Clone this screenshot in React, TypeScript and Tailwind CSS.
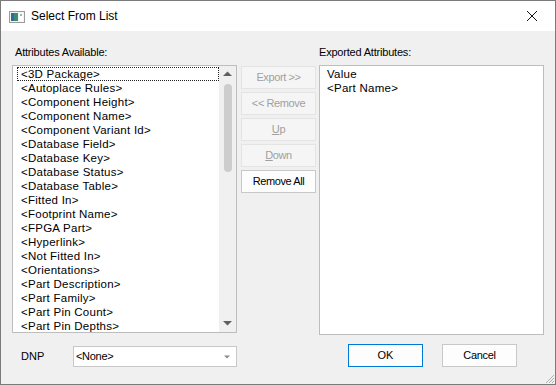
import React from "react";

const items = [
  "<3D Package>",
  "<Autoplace Rules>",
  "<Component Height>",
  "<Component Name>",
  "<Component Variant Id>",
  "<Database Field>",
  "<Database Key>",
  "<Database Status>",
  "<Database Table>",
  "<Fitted In>",
  "<Footprint Name>",
  "<FPGA Part>",
  "<Hyperlink>",
  "<Not Fitted In>",
  "<Orientations>",
  "<Part Description>",
  "<Part Family>",
  "<Part Pin Count>",
  "<Part Pin Depths>",
];

const btnBase =
  "h-[23px] w-[75px] border text-[11px] tracking-[-0.4px] flex items-center justify-center leading-none";

export default function App() {
  return (
    <div
      className="w-[556px] h-[385px] border border-[#7a7a7a] flex flex-col bg-[#f0f0f0] text-[#000] overflow-hidden"
      style={{ fontFamily: '"Liberation Sans", Arial, sans-serif' }}
    >
      {/* Title bar */}
      <div className="h-[30px] bg-white flex items-center shrink-0">
        <svg width="16" height="12" viewBox="0 0 16 12" className="ml-[8px] mt-[1px]">
          <rect x="0.5" y="0.5" width="15" height="11" fill="#f4f4f4" stroke="#9a9a9a" />
          <rect x="2" y="2" width="7" height="8" fill="#3b8a7a" />
          <rect x="2" y="2" width="3" height="8" fill="#2f6aa0" />
          <rect x="10" y="2" width="4" height="8" fill="#ffffff" />
          <rect x="11" y="3" width="2" height="2" fill="#8fbf9a" />
        </svg>
        <span className="ml-[6px] text-[12px] text-black">Select From List</span>
        <div className="ml-auto mr-[17px] w-[12px] h-[12px] flex items-center justify-center">
          <svg width="12" height="12" viewBox="0 0 12 12">
            <path d="M1 1 L11 11 M11 1 L1 11" stroke="#111" strokeWidth="1" />
          </svg>
        </div>
      </div>

      {/* Body */}
      <div className="flex-1 flex flex-col pl-[11px] pr-[11px] pt-[14px]">
        <div className="flex">
          {/* Left column */}
          <div className="w-[225px] flex flex-col">
            <div className="h-[20px] pl-[3px] text-[11px] tracking-[-0.2px] leading-[15px]">
              Attributes Available:
            </div>
            <div className="h-[268px] border border-[#bdbdbd] bg-white flex overflow-hidden">
              <div className="flex-1 pt-[1px] pl-[4px] overflow-hidden">
                {items.map((it, i) => (
                  <div
                    key={it}
                    className={
                      "h-[14px] pl-[4px] text-[11.5px] leading-[14px] whitespace-nowrap tracking-[0.25px] " +
                      (i === 0 ? "outline outline-1 outline-dotted outline-[#222] -outline-offset-1" : "")
                    }
                  >
                    {it}
                  </div>
                ))}
              </div>
              <div className="w-[17px] bg-[#f0f0f0] flex flex-col items-center">
                <svg width="9" height="6" viewBox="0 0 9 6" className="mt-[5px]">
                  <path d="M0 5 L4.5 0.5 L9 5 Z" fill="#606060" />
                </svg>
                <div className="mt-[7px] w-[8px] h-[88px] rounded-[4px] bg-[#cdcdcd]" />
                <div className="flex-1" />
                <svg width="9" height="6" viewBox="0 0 9 6" className="mb-[6px]">
                  <path d="M0 1 L4.5 5.5 L9 1 Z" fill="#606060" />
                </svg>
              </div>
            </div>
          </div>

          {/* Buttons */}
          <div className="w-[75px] ml-[4px] pt-[20px] flex flex-col gap-[3px]">
            <div className={btnBase + " bg-[#f5f5f5] border-[#e4e4e4] text-[#a0a0a0] mt-[1px]"}>Export &gt;&gt;</div>
            <div className={btnBase + " bg-[#f5f5f5] border-[#e4e4e4] text-[#a0a0a0]"}>&lt;&lt; Remove</div>
            <div className={btnBase + " bg-[#f5f5f5] border-[#e4e4e4] text-[#a0a0a0]"}>
              <span><span className="underline">U</span>p</span>
            </div>
            <div className={btnBase + " bg-[#f5f5f5] border-[#e4e4e4] text-[#a0a0a0]"}>
              <span><span className="underline">D</span>own</span>
            </div>
            <div className={btnBase + " bg-[#fdfdfd] border-[#c8c8c8] text-black"}>Remove All</div>
          </div>

          {/* Right column */}
          <div className="w-[225px] ml-[3px] flex flex-col">
            <div className="h-[20px] text-[11px] tracking-[-0.2px] leading-[15px]">Exported Attributes:</div>
            <div className="h-[270px] border border-[#bdbdbd] bg-white pt-[1px] pl-[7px]">
              <div className="h-[14px] text-[11.5px] leading-[14px] tracking-[0.25px]">Value</div>
              <div className="h-[14px] text-[11.5px] leading-[14px] tracking-[0.25px]">&lt;Part Name&gt;</div>
            </div>
          </div>
        </div>

        {/* Bottom row */}
        <div className="flex items-start mt-[9px]">
          <div className="w-[225px] flex items-center mt-[2px]">
            <span className="pl-[9px] w-[61px] text-[11px]">DNP</span>
            <div className="w-[164px] h-[21px] border border-[#c8c8c8] bg-white flex items-center pl-[2px] text-[11px] tracking-[-0.3px]">
              <span className="flex-1">&lt;None&gt;</span>
              <svg width="6" height="4" viewBox="0 0 6 4" className="mr-[6px]">
                <path d="M0 0.5 L6 0.5 L3 3.5 Z" fill="#8a8a8a" />
              </svg>
            </div>
          </div>
          <div className="ml-[111px] w-[75px] h-[23px] border border-[#0078d7] bg-[#fdfdfd] flex items-center justify-center text-[11px]">
            OK
          </div>
          <div className="ml-[19px] w-[75px] h-[23px] border border-[#c8c8c8] bg-[#fdfdfd] flex items-center justify-center text-[11px] tracking-[-0.3px]">
            Cancel
          </div>
          <div className="flex-1" />
        </div>
        <div className="flex-1 relative">
          <svg width="10" height="10" viewBox="0 0 10 10" className="absolute right-[-11px] bottom-0">
            <path d="M9 1 L1 9 M9 4 L4 9 M9 7 L7 9" stroke="#b0b0b0" strokeWidth="1" />
          </svg>
        </div>
      </div>
    </div>
  );
}
